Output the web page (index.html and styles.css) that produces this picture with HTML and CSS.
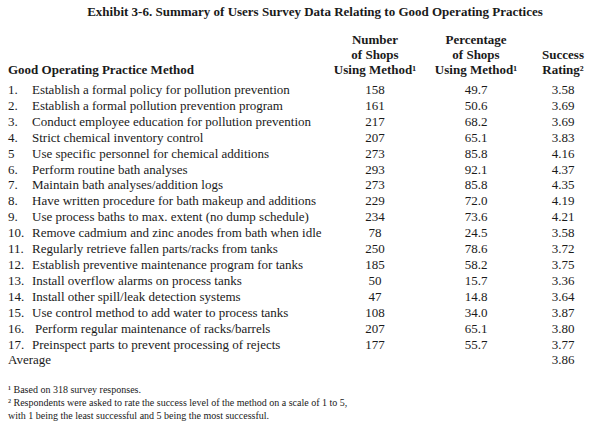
FILE: index.html
```html
<!DOCTYPE html>
<html>
<head>
<meta charset="utf-8">
<link rel="stylesheet" href="styles.css">
</head>
<body>
<div class="page">
  <h1 class="title">Exhibit 3-6. Summary of Users Survey Data Relating to Good Operating Practices</h1>
  <div class="table">
    <div class="row head">
      <div class="label">Good Operating Practice Method</div>
      <div class="c">Number<br>of Shops<br>Using Method¹</div>
      <div class="c">Percentage<br>of Shops<br>Using Method¹</div>
      <div class="c">Success<br>Rating²</div>
    </div>
    <div class="row"><div class="label"><span class="n">1.</span>Establish a formal policy for pollution prevention</div><div class="c">158</div><div class="c">49.7</div><div class="c">3.58</div></div>
    <div class="row"><div class="label"><span class="n">2.</span>Establish a formal pollution prevention program</div><div class="c">161</div><div class="c">50.6</div><div class="c">3.69</div></div>
    <div class="row"><div class="label"><span class="n">3.</span>Conduct employee education for pollution prevention</div><div class="c">217</div><div class="c">68.2</div><div class="c">3.69</div></div>
    <div class="row"><div class="label"><span class="n">4.</span>Strict chemical inventory control</div><div class="c">207</div><div class="c">65.1</div><div class="c">3.83</div></div>
    <div class="row"><div class="label"><span class="n">5</span>Use specific personnel for chemical additions</div><div class="c">273</div><div class="c">85.8</div><div class="c">4.16</div></div>
    <div class="row"><div class="label"><span class="n">6.</span>Perform routine bath analyses</div><div class="c">293</div><div class="c">92.1</div><div class="c">4.37</div></div>
    <div class="row"><div class="label"><span class="n">7.</span>Maintain bath analyses/addition logs</div><div class="c">273</div><div class="c">85.8</div><div class="c">4.35</div></div>
    <div class="row"><div class="label"><span class="n">8.</span>Have written procedure for bath makeup and additions</div><div class="c">229</div><div class="c">72.0</div><div class="c">4.19</div></div>
    <div class="row"><div class="label"><span class="n">9.</span>Use process baths to max. extent (no dump schedule)</div><div class="c">234</div><div class="c">73.6</div><div class="c">4.21</div></div>
    <div class="row"><div class="label"><span class="n">10.</span>Remove cadmium and zinc anodes from bath when idle</div><div class="c">78</div><div class="c">24.5</div><div class="c">3.58</div></div>
    <div class="row"><div class="label"><span class="n">11.</span>Regularly retrieve fallen parts/racks from tanks</div><div class="c">250</div><div class="c">78.6</div><div class="c">3.72</div></div>
    <div class="row"><div class="label"><span class="n">12.</span>Establish preventive maintenance program for tanks</div><div class="c">185</div><div class="c">58.2</div><div class="c">3.75</div></div>
    <div class="row"><div class="label"><span class="n">13.</span>Install overflow alarms on process tanks</div><div class="c">50</div><div class="c">15.7</div><div class="c">3.36</div></div>
    <div class="row"><div class="label"><span class="n">14.</span>Install other spill/leak detection systems</div><div class="c">47</div><div class="c">14.8</div><div class="c">3.64</div></div>
    <div class="row"><div class="label"><span class="n">15.</span>Use control method to add water to process tanks</div><div class="c">108</div><div class="c">34.0</div><div class="c">3.87</div></div>
    <div class="row"><div class="label"><span class="n wide">16.</span>Perform regular maintenance of racks/barrels</div><div class="c">207</div><div class="c">65.1</div><div class="c">3.80</div></div>
    <div class="row"><div class="label"><span class="n">17.</span>Preinspect parts to prevent processing of rejects</div><div class="c">177</div><div class="c">55.7</div><div class="c">3.77</div></div>
    <div class="row"><div class="label">Average</div><div class="c"></div><div class="c"></div><div class="c">3.86</div></div>
  </div>
  <div class="notes">
    <p>¹ Based on 318 survey responses.</p>
    <p>² Respondents were asked to rate the success level of the method on a scale of 1 to 5,</p>
    <p>with 1 being the least successful and 5 being the most successful.</p>
  </div>
</div>
</body>
</html>
```

FILE: styles.css
```css
html, body {
  margin: 0;
  padding: 0;
  background: #ffffff;
}
body {
  font-family: "Liberation Serif", "Times New Roman", serif;
  color: #1a1a1a;
  width: 600px;
  height: 424px;
  overflow: hidden;
}
.page {
  padding: 3px 0 0 8px;
}
.title {
  margin: 0;
  font-size: 13px;
  line-height: 18px;
  font-weight: bold;
  text-align: center;
  padding-left: 22px;
}
.table {
  margin-top: 11px;
}
.row {
  display: grid;
  grid-template-columns: 320px 94px 108px 66px;
  font-size: 13px;
  line-height: 15.9px;
}
.row.head {
  font-weight: bold;
  line-height: 15px;
  align-items: end;
  margin-bottom: 5px;
}
.label {
  white-space: nowrap;
}
.n {
  display: inline-block;
  width: 24px;
}
.n.wide {
  width: 27px;
}
.c {
  text-align: center;
}
.notes {
  margin-top: 15px;
  font-size: 10px;
  line-height: 13px;
}
.notes p {
  margin: 0;
  height: 13px;
}
```
